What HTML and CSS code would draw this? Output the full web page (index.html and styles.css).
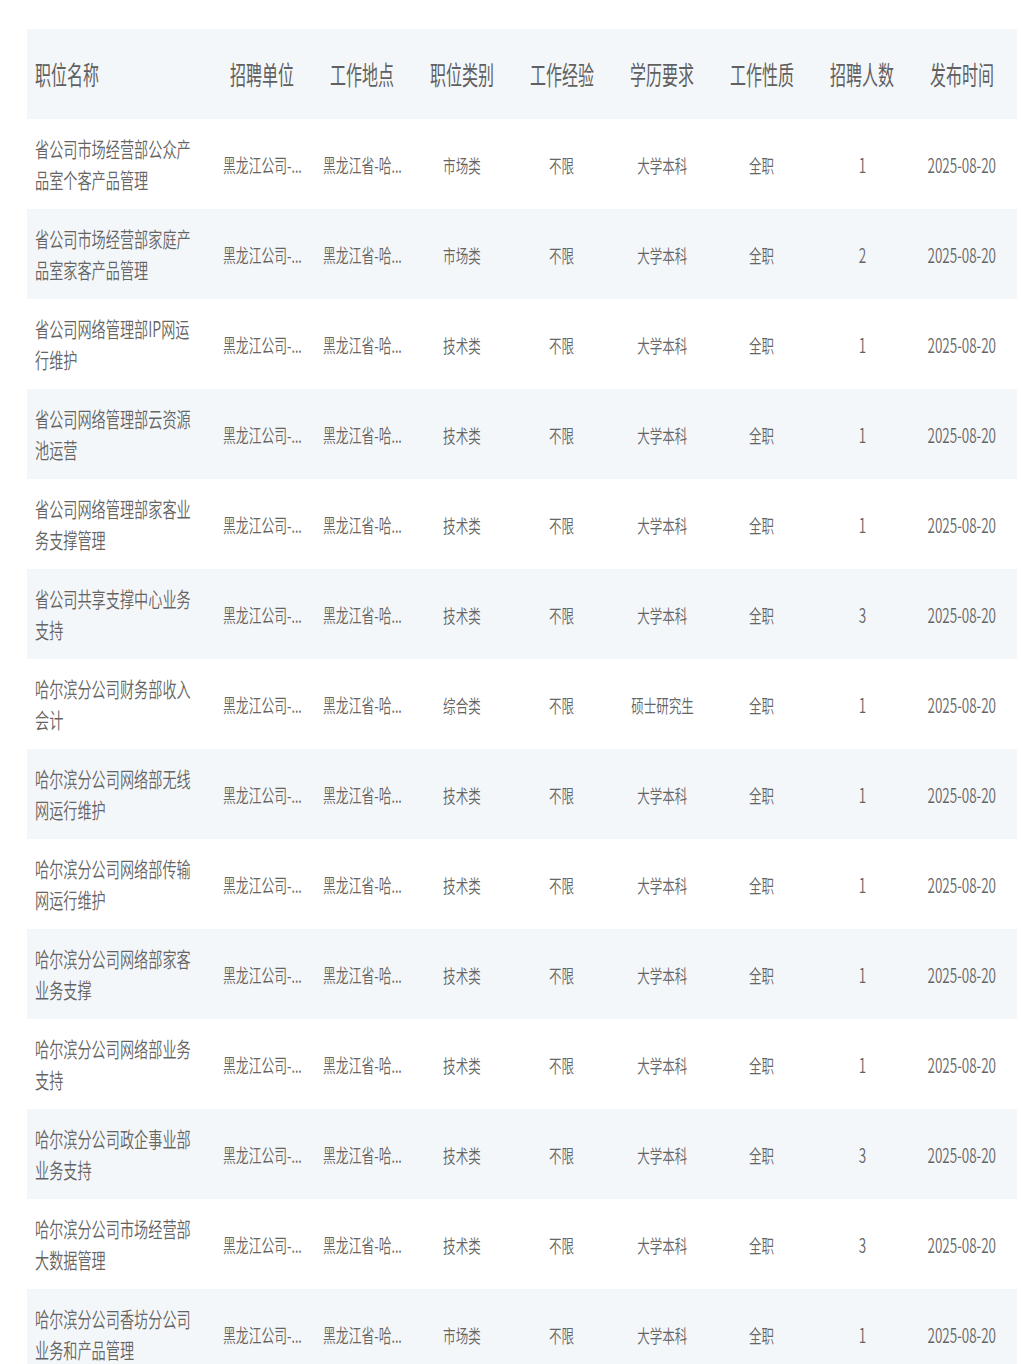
FILE: index.html
```html
<!DOCTYPE html>
<html lang="zh-CN">
<head>
<meta charset="utf-8">
<title>职位列表</title>
<link rel="stylesheet" href="styles.css">
</head>
<body>
<div class="table">
  <div class="row head">
    <div class="cell first"><span class="t">职位名称</span></div>
    <div class="cell"><span class="t">招聘单位</span></div>
    <div class="cell"><span class="t">工作地点</span></div>
    <div class="cell"><span class="t">职位类别</span></div>
    <div class="cell"><span class="t">工作经验</span></div>
    <div class="cell"><span class="t">学历要求</span></div>
    <div class="cell"><span class="t">工作性质</span></div>
    <div class="cell"><span class="t">招聘人数</span></div>
    <div class="cell"><span class="t">发布时间</span></div>
  </div>

  <div class="row">
    <div class="cell first"><span class="t">省公司市场经营部公众产品室个客产品管理</span></div>
    <div class="cell"><span class="t trunc">黑龙江公司-...</span></div>
    <div class="cell"><span class="t trunc">黑龙江省-哈...</span></div>
    <div class="cell"><span class="t">市场类</span></div>
    <div class="cell"><span class="t">不限</span></div>
    <div class="cell"><span class="t">大学本科</span></div>
    <div class="cell"><span class="t">全职</span></div>
    <div class="cell"><span class="t num">1</span></div>
    <div class="cell"><span class="t num">2025-08-20</span></div>
  </div>
  <div class="row alt">
    <div class="cell first"><span class="t">省公司市场经营部家庭产品室家客产品管理</span></div>
    <div class="cell"><span class="t trunc">黑龙江公司-...</span></div>
    <div class="cell"><span class="t trunc">黑龙江省-哈...</span></div>
    <div class="cell"><span class="t">市场类</span></div>
    <div class="cell"><span class="t">不限</span></div>
    <div class="cell"><span class="t">大学本科</span></div>
    <div class="cell"><span class="t">全职</span></div>
    <div class="cell"><span class="t num">2</span></div>
    <div class="cell"><span class="t num">2025-08-20</span></div>
  </div>
  <div class="row">
    <div class="cell first"><span class="t">省公司网络管理部IP网运行维护</span></div>
    <div class="cell"><span class="t trunc">黑龙江公司-...</span></div>
    <div class="cell"><span class="t trunc">黑龙江省-哈...</span></div>
    <div class="cell"><span class="t">技术类</span></div>
    <div class="cell"><span class="t">不限</span></div>
    <div class="cell"><span class="t">大学本科</span></div>
    <div class="cell"><span class="t">全职</span></div>
    <div class="cell"><span class="t num">1</span></div>
    <div class="cell"><span class="t num">2025-08-20</span></div>
  </div>
  <div class="row alt">
    <div class="cell first"><span class="t">省公司网络管理部云资源池运营</span></div>
    <div class="cell"><span class="t trunc">黑龙江公司-...</span></div>
    <div class="cell"><span class="t trunc">黑龙江省-哈...</span></div>
    <div class="cell"><span class="t">技术类</span></div>
    <div class="cell"><span class="t">不限</span></div>
    <div class="cell"><span class="t">大学本科</span></div>
    <div class="cell"><span class="t">全职</span></div>
    <div class="cell"><span class="t num">1</span></div>
    <div class="cell"><span class="t num">2025-08-20</span></div>
  </div>
  <div class="row">
    <div class="cell first"><span class="t">省公司网络管理部家客业务支撑管理</span></div>
    <div class="cell"><span class="t trunc">黑龙江公司-...</span></div>
    <div class="cell"><span class="t trunc">黑龙江省-哈...</span></div>
    <div class="cell"><span class="t">技术类</span></div>
    <div class="cell"><span class="t">不限</span></div>
    <div class="cell"><span class="t">大学本科</span></div>
    <div class="cell"><span class="t">全职</span></div>
    <div class="cell"><span class="t num">1</span></div>
    <div class="cell"><span class="t num">2025-08-20</span></div>
  </div>
  <div class="row alt">
    <div class="cell first"><span class="t">省公司共享支撑中心业务支持</span></div>
    <div class="cell"><span class="t trunc">黑龙江公司-...</span></div>
    <div class="cell"><span class="t trunc">黑龙江省-哈...</span></div>
    <div class="cell"><span class="t">技术类</span></div>
    <div class="cell"><span class="t">不限</span></div>
    <div class="cell"><span class="t">大学本科</span></div>
    <div class="cell"><span class="t">全职</span></div>
    <div class="cell"><span class="t num">3</span></div>
    <div class="cell"><span class="t num">2025-08-20</span></div>
  </div>
  <div class="row">
    <div class="cell first"><span class="t">哈尔滨分公司财务部收入会计</span></div>
    <div class="cell"><span class="t trunc">黑龙江公司-...</span></div>
    <div class="cell"><span class="t trunc">黑龙江省-哈...</span></div>
    <div class="cell"><span class="t">综合类</span></div>
    <div class="cell"><span class="t">不限</span></div>
    <div class="cell"><span class="t">硕士研究生</span></div>
    <div class="cell"><span class="t">全职</span></div>
    <div class="cell"><span class="t num">1</span></div>
    <div class="cell"><span class="t num">2025-08-20</span></div>
  </div>
  <div class="row alt">
    <div class="cell first"><span class="t">哈尔滨分公司网络部无线网运行维护</span></div>
    <div class="cell"><span class="t trunc">黑龙江公司-...</span></div>
    <div class="cell"><span class="t trunc">黑龙江省-哈...</span></div>
    <div class="cell"><span class="t">技术类</span></div>
    <div class="cell"><span class="t">不限</span></div>
    <div class="cell"><span class="t">大学本科</span></div>
    <div class="cell"><span class="t">全职</span></div>
    <div class="cell"><span class="t num">1</span></div>
    <div class="cell"><span class="t num">2025-08-20</span></div>
  </div>
  <div class="row">
    <div class="cell first"><span class="t">哈尔滨分公司网络部传输网运行维护</span></div>
    <div class="cell"><span class="t trunc">黑龙江公司-...</span></div>
    <div class="cell"><span class="t trunc">黑龙江省-哈...</span></div>
    <div class="cell"><span class="t">技术类</span></div>
    <div class="cell"><span class="t">不限</span></div>
    <div class="cell"><span class="t">大学本科</span></div>
    <div class="cell"><span class="t">全职</span></div>
    <div class="cell"><span class="t num">1</span></div>
    <div class="cell"><span class="t num">2025-08-20</span></div>
  </div>
  <div class="row alt">
    <div class="cell first"><span class="t">哈尔滨分公司网络部家客业务支撑</span></div>
    <div class="cell"><span class="t trunc">黑龙江公司-...</span></div>
    <div class="cell"><span class="t trunc">黑龙江省-哈...</span></div>
    <div class="cell"><span class="t">技术类</span></div>
    <div class="cell"><span class="t">不限</span></div>
    <div class="cell"><span class="t">大学本科</span></div>
    <div class="cell"><span class="t">全职</span></div>
    <div class="cell"><span class="t num">1</span></div>
    <div class="cell"><span class="t num">2025-08-20</span></div>
  </div>
  <div class="row">
    <div class="cell first"><span class="t">哈尔滨分公司网络部业务支持</span></div>
    <div class="cell"><span class="t trunc">黑龙江公司-...</span></div>
    <div class="cell"><span class="t trunc">黑龙江省-哈...</span></div>
    <div class="cell"><span class="t">技术类</span></div>
    <div class="cell"><span class="t">不限</span></div>
    <div class="cell"><span class="t">大学本科</span></div>
    <div class="cell"><span class="t">全职</span></div>
    <div class="cell"><span class="t num">1</span></div>
    <div class="cell"><span class="t num">2025-08-20</span></div>
  </div>
  <div class="row alt">
    <div class="cell first"><span class="t">哈尔滨分公司政企事业部业务支持</span></div>
    <div class="cell"><span class="t trunc">黑龙江公司-...</span></div>
    <div class="cell"><span class="t trunc">黑龙江省-哈...</span></div>
    <div class="cell"><span class="t">技术类</span></div>
    <div class="cell"><span class="t">不限</span></div>
    <div class="cell"><span class="t">大学本科</span></div>
    <div class="cell"><span class="t">全职</span></div>
    <div class="cell"><span class="t num">3</span></div>
    <div class="cell"><span class="t num">2025-08-20</span></div>
  </div>
  <div class="row">
    <div class="cell first"><span class="t">哈尔滨分公司市场经营部大数据管理</span></div>
    <div class="cell"><span class="t trunc">黑龙江公司-...</span></div>
    <div class="cell"><span class="t trunc">黑龙江省-哈...</span></div>
    <div class="cell"><span class="t">技术类</span></div>
    <div class="cell"><span class="t">不限</span></div>
    <div class="cell"><span class="t">大学本科</span></div>
    <div class="cell"><span class="t">全职</span></div>
    <div class="cell"><span class="t num">3</span></div>
    <div class="cell"><span class="t num">2025-08-20</span></div>
  </div>
  <div class="row alt">
    <div class="cell first"><span class="t">哈尔滨分公司香坊分公司业务和产品管理</span></div>
    <div class="cell"><span class="t trunc">黑龙江公司-...</span></div>
    <div class="cell"><span class="t trunc">黑龙江省-哈...</span></div>
    <div class="cell"><span class="t">市场类</span></div>
    <div class="cell"><span class="t">不限</span></div>
    <div class="cell"><span class="t">大学本科</span></div>
    <div class="cell"><span class="t">全职</span></div>
    <div class="cell"><span class="t num">1</span></div>
    <div class="cell"><span class="t num">2025-08-20</span></div>
  </div>
</div>
</body>
</html>
```

FILE: styles.css
```css
html, body {
  margin: 0;
  padding: 0;
  background: #ffffff;
  overflow: hidden;
}

body {
  font-family: "Noto Sans CJK SC", "Noto Sans", sans-serif;
  font-weight: 350;
  color: #646464;
  padding: 29px 6px 0 27px;
}

.table {
  width: 990px;
}

.row {
  display: grid;
  grid-template-columns: 185px repeat(8, 100px) 5px;
  height: 90px;
  align-items: center;
  background: #ffffff;
}

.row.alt,
.row.head {
  background: #f4f7fa;
}

.cell {
  display: flex;
  justify-content: center;
  align-items: center;
  min-width: 0;
  white-space: nowrap;
}

.cell.first {
  justify-content: flex-start;
  padding-left: 8px;
  white-space: normal;
}

.t {
  display: inline-block;
  font-size: 18.6px;
  line-height: 31px;
  transform: scaleX(0.674);
  transform-origin: center center;
  flex: none;
}

.t.num {
  font-size: 20px;
}

.t.trunc {
  font-size: 19px;
  letter-spacing: 0;
}

.cell.first .t {
  display: block;
  font-size: 21px;
  width: 236px;
  transform-origin: left center;
  word-break: break-all;
}

.head .t {
  font-size: 26px;
  line-height: 34px;
  font-weight: 400;
  transform: scaleX(0.615);
  color: #606060;
}

.head .cell.first .t {
  font-size: 26px;
  width: auto;
}
```
